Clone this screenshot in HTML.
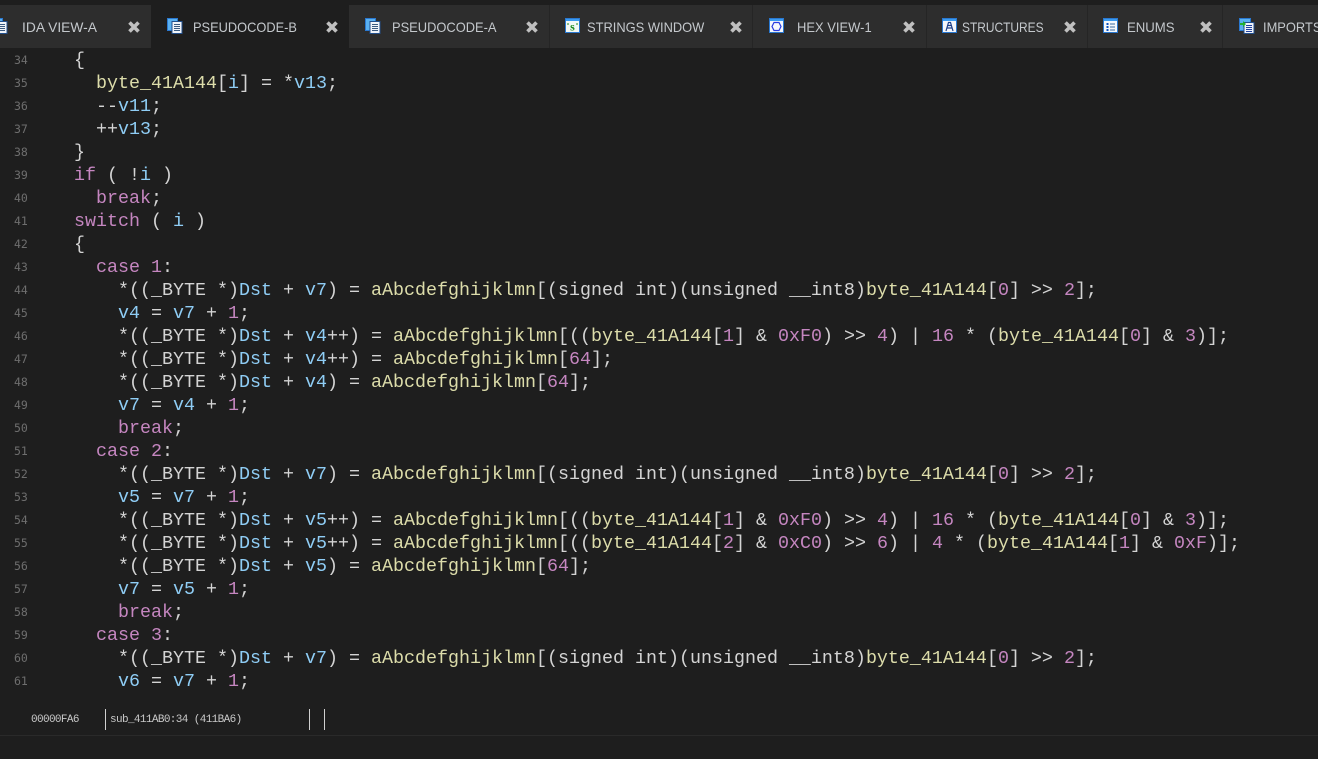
<!DOCTYPE html>
<html><head><meta charset="utf-8"><style>
html,body{margin:0;padding:0;background:#1e1e1e;width:1318px;height:759px;overflow:hidden}
#bar{position:absolute;left:0;top:5px;width:1318px;height:43px;background:#2d2d2d}
.sep{position:absolute;top:5px;height:43px;width:1px;background:#252525}
#act{position:absolute;left:151px;top:5px;width:198px;height:43px;background:#1e1e1e}
.t{position:absolute;top:18px;font:14px/18px "Liberation Sans",sans-serif;color:#c4c8cc;white-space:nowrap;transform-origin:0 50%}
.x{position:absolute;top:20px;width:14px;height:14px}
.i{position:absolute;top:18px;width:16px;height:16px}
pre{position:absolute;left:74px;top:49px;margin:0;font:18.33px/23px "Liberation Mono",monospace;color:#d4d4d4}
#n{position:absolute;left:14px;top:49px;font:11.5px/23px "DejaVu Sans Mono",monospace;color:#6e6e6e;white-space:pre}
.b{color:#8fcdf5}.y{color:#dcdcaa}.p{color:#c586c0}
.s{position:absolute;top:713px;font:11px/14px "Liberation Mono",monospace;letter-spacing:-.62px;color:#c8c8c8;white-space:pre}
.v{position:absolute;top:709px;width:1px;height:21px;background:#d0d0d0}
</style></head><body>
<div id="bar"></div><div id="act"></div>
<div class="sep" style="left:549px"></div><div class="sep" style="left:752px"></div><div class="sep" style="left:926px"></div><div class="sep" style="left:1087px"></div><div class="sep" style="left:1222px"></div>

<svg style="display:none"><defs>
<symbol id="xx" viewBox="0 0 14 14"><path d="M2.5 2.5L11.5 11.5M11.5 2.5L2.5 11.5" stroke="#c0c0c0" stroke-width="3.6"/></symbol>
<symbol id="doc" viewBox="0 0 16 16"><rect x="0.5" y="0.5" width="10" height="12" fill="#5ab0f0" stroke="#2a78d0"/><rect x="5" y="3.5" width="10" height="12" fill="#f0f4fa" stroke="#23508c"/><path d="M7 6.5h6M7 8.5h6M7 10.5h6M7 12.5h6" stroke="#3a5a80"/></symbol>
</defs></svg>

<svg class="i" style="left:-8px"><use href="#doc"/></svg>
<div class="t" style="left:22px;transform:scaleX(.987)">IDA VIEW-A</div><svg class="x" style="left:127px"><use href="#xx"/></svg>
<svg class="i" style="left:167px"><use href="#doc"/></svg>
<div class="t" style="left:193px;transform:scaleX(.915)">PSEUDOCODE-B</div><svg class="x" style="left:325px"><use href="#xx"/></svg>
<svg class="i" style="left:365px"><use href="#doc"/></svg>
<div class="t" style="left:392px;transform:scaleX(.92)">PSEUDOCODE-A</div><svg class="x" style="left:525px"><use href="#xx"/></svg>
<svg class="i" style="left:565px;width:15px;height:15px" viewBox="0 0 15 15"><rect x=".5" y=".5" width="14" height="14" fill="#f4f8f4" stroke="#2a78d0"/><rect x="1" y="1" width="13" height="2" fill="#3a9af0"/><text x="7.5" y="12.5" text-anchor="middle" font-family="Liberation Serif" font-weight="bold" font-size="12" fill="#1c8a1c">s</text><path d="M3 5v2M12 5v2" stroke="#1c8a1c"/></svg>
<div class="t" style="left:587px;transform:scaleX(.92)">STRINGS WINDOW</div><svg class="x" style="left:729px"><use href="#xx"/></svg>
<svg class="i" style="left:769px;width:15px;height:15px" viewBox="0 0 15 15"><rect x=".5" y=".5" width="14" height="14" fill="#f6f8fc" stroke="#2a78d0"/><rect x="1" y="1" width="13" height="2" fill="#3a9af0"/><path d="M5 4.5h5l2 4-2 4H5L3 8.5z" fill="none" stroke="#2a3ae0" stroke-width="1.2"/></svg>
<div class="t" style="left:797px;transform:scaleX(.926)">HEX VIEW-1</div><svg class="x" style="left:902px"><use href="#xx"/></svg>
<svg class="i" style="left:942px;width:15px;height:15px" viewBox="0 0 15 15"><rect x=".5" y=".5" width="14" height="14" fill="#f4f6fa" stroke="#2a78d0"/><rect x="1" y="1" width="13" height="2" fill="#3a9af0"/><path d="M4 13L6.5 4.5h2L11 13M5 10h5M6 7.5h3" fill="none" stroke="#1d3f8a" stroke-width="1.2"/></svg>
<div class="t" style="left:962px;transform:scaleX(.853)">STRUCTURES</div><svg class="x" style="left:1063px"><use href="#xx"/></svg>
<svg class="i" style="left:1103px;width:15px;height:15px" viewBox="0 0 15 15"><rect x=".5" y=".5" width="14" height="14" fill="#f4f8fc" stroke="#2a78d0"/><rect x="1" y="1" width="13" height="2" fill="#3a9af0"/><path d="M3.5 6h2M3.5 9h2M3.5 12h2" stroke="#0a50c0" stroke-width="2"/><path d="M7 6h5M7 9h5M7 12h5" stroke="#3a6aa0"/></svg>
<div class="t" style="left:1127px;transform:scaleX(.94)">ENUMS</div><svg class="x" style="left:1199px"><use href="#xx"/></svg>
<svg class="i" style="left:1239px" viewBox="0 0 16 16"><rect x=".5" y=".5" width="11" height="12" fill="#5ab0f0" stroke="#2a78d0"/><rect x="5" y="4.5" width="10" height="11" fill="#f0f4fa" stroke="#23508c"/><path d="M7 7.5h6M7 9.5h6M7 11.5h6M7 13.5h6" stroke="#2040a0"/><path d="M1 5h3V3l3 3-3 3V7H1z" fill="#22b030"/></svg>
<div class="t" style="left:1263px;transform:scaleX(.92)">IMPORTS</div>

<div id="n">34
35
36
37
38
39
40
41
42
43
44
45
46
47
48
49
50
51
52
53
54
55
56
57
58
59
60
61</div>

<pre>{
  <span class="y">byte_41A144</span>[<span class="b">i</span>] = *<span class="b">v13</span>;
  --<span class="b">v11</span>;
  ++<span class="b">v13</span>;
}
<span class="p">if</span> ( !<span class="b">i</span> )
  <span class="p">break</span>;
<span class="p">switch</span> ( <span class="b">i</span> )
{
  <span class="p">case</span> <span class="p">1</span>:
    *((_BYTE *)<span class="b">Dst</span> + <span class="b">v7</span>) = <span class="y">aAbcdefghijklmn</span>[(signed int)(unsigned __int8)<span class="y">byte_41A144</span>[<span class="p">0</span>] &gt;&gt; <span class="p">2</span>];
    <span class="b">v4</span> = <span class="b">v7</span> + <span class="p">1</span>;
    *((_BYTE *)<span class="b">Dst</span> + <span class="b">v4</span>++) = <span class="y">aAbcdefghijklmn</span>[((<span class="y">byte_41A144</span>[<span class="p">1</span>] &amp; <span class="p">0xF0</span>) &gt;&gt; <span class="p">4</span>) | <span class="p">16</span> * (<span class="y">byte_41A144</span>[<span class="p">0</span>] &amp; <span class="p">3</span>)];
    *((_BYTE *)<span class="b">Dst</span> + <span class="b">v4</span>++) = <span class="y">aAbcdefghijklmn</span>[<span class="p">64</span>];
    *((_BYTE *)<span class="b">Dst</span> + <span class="b">v4</span>) = <span class="y">aAbcdefghijklmn</span>[<span class="p">64</span>];
    <span class="b">v7</span> = <span class="b">v4</span> + <span class="p">1</span>;
    <span class="p">break</span>;
  <span class="p">case</span> <span class="p">2</span>:
    *((_BYTE *)<span class="b">Dst</span> + <span class="b">v7</span>) = <span class="y">aAbcdefghijklmn</span>[(signed int)(unsigned __int8)<span class="y">byte_41A144</span>[<span class="p">0</span>] &gt;&gt; <span class="p">2</span>];
    <span class="b">v5</span> = <span class="b">v7</span> + <span class="p">1</span>;
    *((_BYTE *)<span class="b">Dst</span> + <span class="b">v5</span>++) = <span class="y">aAbcdefghijklmn</span>[((<span class="y">byte_41A144</span>[<span class="p">1</span>] &amp; <span class="p">0xF0</span>) &gt;&gt; <span class="p">4</span>) | <span class="p">16</span> * (<span class="y">byte_41A144</span>[<span class="p">0</span>] &amp; <span class="p">3</span>)];
    *((_BYTE *)<span class="b">Dst</span> + <span class="b">v5</span>++) = <span class="y">aAbcdefghijklmn</span>[((<span class="y">byte_41A144</span>[<span class="p">2</span>] &amp; <span class="p">0xC0</span>) &gt;&gt; <span class="p">6</span>) | <span class="p">4</span> * (<span class="y">byte_41A144</span>[<span class="p">1</span>] &amp; <span class="p">0xF</span>)];
    *((_BYTE *)<span class="b">Dst</span> + <span class="b">v5</span>) = <span class="y">aAbcdefghijklmn</span>[<span class="p">64</span>];
    <span class="b">v7</span> = <span class="b">v5</span> + <span class="p">1</span>;
    <span class="p">break</span>;
  <span class="p">case</span> <span class="p">3</span>:
    *((_BYTE *)<span class="b">Dst</span> + <span class="b">v7</span>) = <span class="y">aAbcdefghijklmn</span>[(signed int)(unsigned __int8)<span class="y">byte_41A144</span>[<span class="p">0</span>] &gt;&gt; <span class="p">2</span>];
    <span class="b">v6</span> = <span class="b">v7</span> + <span class="p">1</span>;</pre>

<div class="s" style="left:31px">00000FA6</div>
<div class="v" style="left:105px"></div>
<div class="s" style="left:110px">sub_411AB0:34 (411BA6)</div>
<div class="v" style="left:309px"></div>
<div class="v" style="left:324px"></div>
<div style="position:absolute;left:0;top:735px;width:1318px;height:1px;background:#2a2a2a"></div>
</body></html>
